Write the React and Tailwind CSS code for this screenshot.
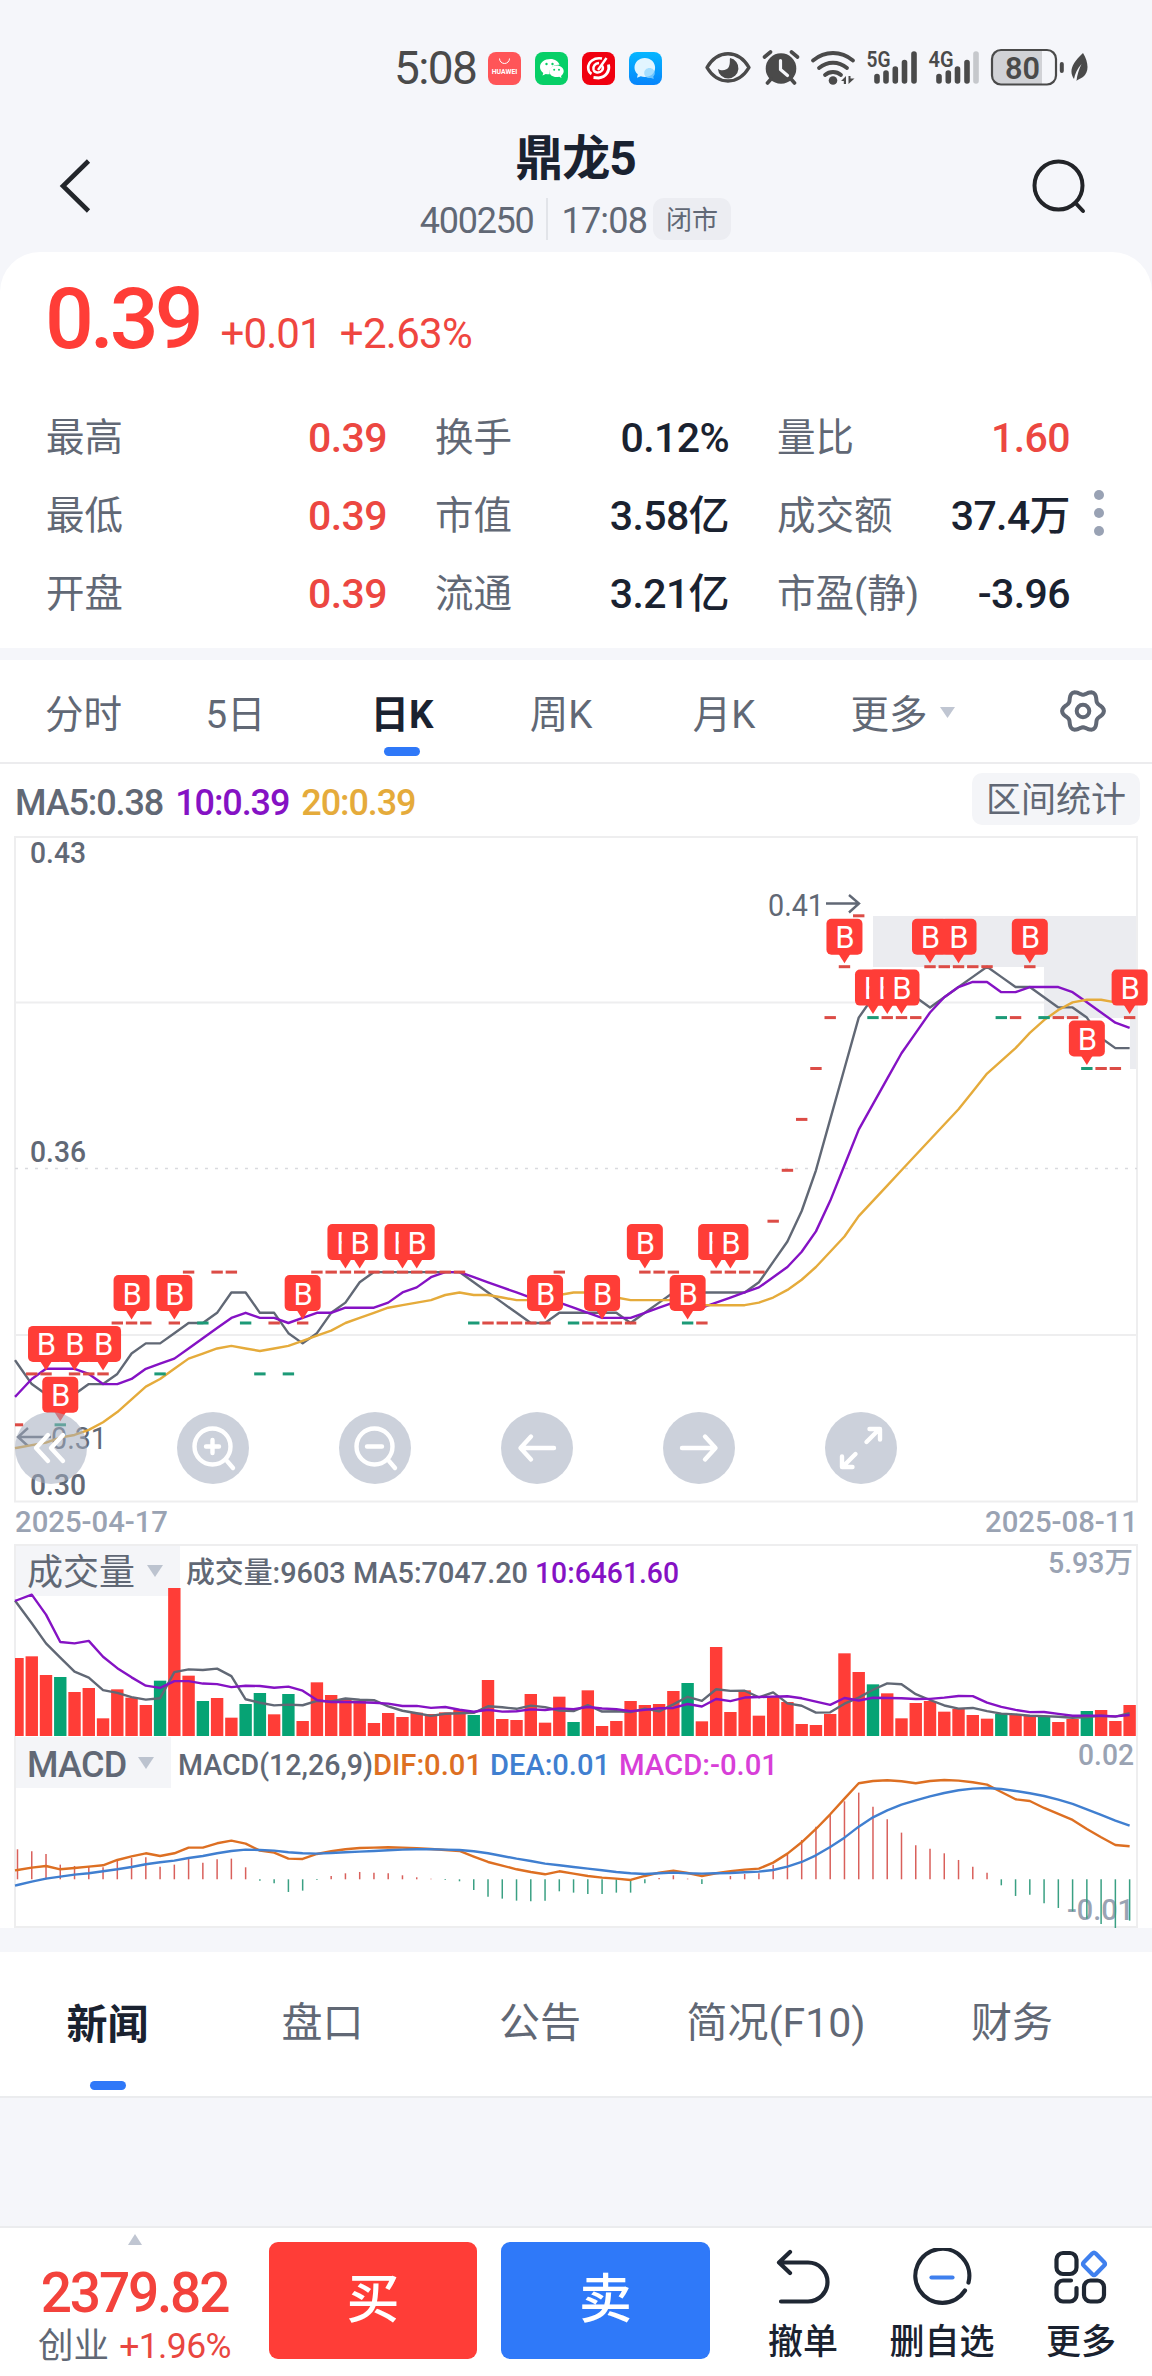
import { useState } from "react";

const RED = "#ff3d37";
const GREEN = "#06a374";
const GRAY = "#616875";
const PURPLE = "#8512c4";
const GOLD = "#e5ab3b";
const ORANGE = "#dd6f22";
const BLUE = "#407fd0";

const FONT = "font-['Roboto','Noto_Sans_CJK_SC',sans-serif]";

const QUOTES = [
  { label: "最高", value: "0.39", up: true },
  { label: "换手", value: "0.12%" },
  { label: "量比", value: "1.60", up: true },
  { label: "最低", value: "0.39", up: true },
  { label: "市值", value: "3.58亿" },
  { label: "成交额", value: "37.4万" },
  { label: "开盘", value: "0.39", up: true },
  { label: "流通", value: "3.21亿" },
  { label: "市盈(静)", value: "-3.96" },
];

// closes in cents above 0.31; the first 19 days are off screen and only feed the averages
const HISTORY = [0, 0, -2, 0, -1, -2, -2, -3, -3, -2, -2, -1, 0, 1, 2, 3, 2, 1, 0];
const CLOSES = [
  0, 1, 1, 0, 1, 1, 1, 2, 2, 2, 1, 2, 3, 2, 3, 3, 2, 1, 2, 1,
  2, 3, 3, 3, 3, 3, 3, 3, 3, 3, 3, 3, 2, 2, 2, 2, 2, 2, 3, 2,
  2, 2, 2, 2, 3, 3, 3, 2, 2, 3, 3, 3, 3, 4, 5, 6, 7, 8, 9, 10,
  8, 8, 8, 8, 9, 9, 9, 9, 9, 8, 8, 9, 8, 8, 8, 7, 7, 7, 8,
];
const DOWN_DAYS = [3, 10, 13, 16, 17, 19, 32, 39, 47, 60, 69, 72, 75];
const BUYS = [2, 3, 4, 6, 8, 11, 20, 23, 24, 27, 28, 37, 41, 44, 47, 49, 50, 58, 60, 61, 62, 64, 66, 71, 75, 78];

const VOL_HISTORY = [79, 783, 997, 172, 69, 529, 483, 392, 342];
const VOLUMES = [
  234, 239, 183, 177, 132, 144, 53, 140, 115, 93, 166, 444, 181, 105, 114, 55, 96, 129, 65, 126,
  45, 161, 123, 108, 106, 39, 69, 57, 70, 66, 71, 78, 63, 168, 51, 48, 126, 40, 118, 42,
  137, 30, 45, 105, 93, 96, 135, 159, 44, 267, 72, 137, 61, 118, 102, 36, 33, 66, 248, 192,
  155, 128, 53, 99, 105, 73, 81, 63, 52, 66, 63, 60, 57, 42, 51, 75, 78, 45, 93,
];

const DIF = [
  28, 35, 40, 30, 34, 38, 42, 58, 69, 78, 70, 78, 95, 95, 108, 116, 107, 86, 80, 62,
  61, 76, 84, 90, 94, 95, 96, 95, 93, 91, 88, 85, 68, 52, 41, 30, 22, 15, 24, 17,
  10, 5, 2, -2, 10, 20, 26, 19, 10, 18, 24, 29, 32, 50, 77, 111, 151, 195, 242, 288,
  295, 297, 294, 288, 295, 298, 296, 291, 284, 262, 240, 235, 214, 196, 178, 151, 126, 103, 99,
];
const DEA = [
  -17, -7, 2, 8, 14, 18, 24, 30, 37, 45, 51, 56, 64, 70, 78, 85, 89, 88, 86, 81,
  78, 77, 79, 81, 83, 85, 87, 89, 90, 90, 89, 88, 84, 78, 70, 62, 55, 47, 42, 37,
  32, 27, 22, 18, 16, 18, 20, 18, 17, 18, 19, 21, 23, 28, 38, 52, 72, 97, 125, 158,
  186, 207, 224, 237, 249, 259, 267, 272, 274, 271, 265, 258, 250, 239, 226, 210, 193, 176, 161,
];

const xAt = (i) => 17.5 + i * 14.258;
const priceY = (level) => 588.8 - level * 50.9;
const volY = (v) => 192 - v / 3;
const macdY = (v) => 143.3 - v / 3;

const average = (history, values, n) => {
  const all = [...history, ...values];
  return values.map((_, i) => {
    const end = history.length + i + 1;
    return all.slice(end - n, end).reduce((a, b) => a + b, 0) / n;
  });
};

// extends the line to the left frame along its first segment
const toPoints = (values, scale) => {
  const pts = values.map((v, i) => [xAt(i), scale(v)]);
  const slope = (pts[1][1] - pts[0][1]) / (pts[1][0] - pts[0][0]);
  return [[15, pts[0][1] - slope * 2.5], ...pts].map((p) => p.join(",")).join(" ");
};

// six-lobed outline of the settings gear
const GEAR = Array.from({ length: 72 }, (_, i) => {
  const a = (i * Math.PI) / 36;
  const r = 18.6 + 2.3 * Math.cos(6 * a);
  return `${(24 + r * Math.cos(a)).toFixed(2)},${(24 + r * Math.sin(a)).toFixed(2)}`;
}).join(" ");

function Line({ values, scale, color }) {
  return <polyline points={toPoints(values, scale)} fill="none" stroke={color} strokeWidth="2.4" strokeLinejoin="round" />;
}

function Label({ x, y, width, size = 29, color = GRAY, weight = 500, children }) {
  return (
    <text x={x} y={y} fontSize={size} fill={color} fontWeight={weight} textLength={width} lengthAdjust="spacingAndGlyphs">
      {children}
    </text>
  );
}

function StatusBar() {
  return (
    <div className="relative flex h-[100px] items-start text-[#4a4a4a]">
      <span className="ml-[394px] mt-[41px] w-[94px] text-[46px] leading-[54px] tracking-[-1.6px]">5:08</span>
      <div className="mt-[52px] flex gap-[14px]">
        <svg width="33" height="33" viewBox="0 0 33 33">
          <rect width="33" height="33" rx="8" fill="#ff5558" />
          <path d="M11.5 6.5a5 5 0 0 0 10 0" fill="none" stroke="#fff" strokeWidth="1" />
          <text x="3.8" y="21.5" fontSize="6.6" fontWeight="700" fill="#fff" textLength="25.5" lengthAdjust="spacingAndGlyphs">HUAWEI</text>
        </svg>
        <svg width="33" height="33" viewBox="0 0 33 33">
          <rect width="33" height="33" rx="8" fill="#07cf67" />
          <path d="M15.500 7C9.500 7 5 10.500 5 15c0 2.500 1.200 4.500 3.300 5.900L7.500 23.500l3.200-1.600c1.200.3 2.500.5 4 .4C13.500 17 17.500 12.500 24.500 12.800 23.500 9.500 20 7 15.500 7z" fill="#fff" />
          <path d="M21.500 13.500c-4.200 0-7.200 2.500-7.200 5.800s3 5.800 7.200 5.800c1 0 1.900-.2 2.700-.4l2.300 1.200-.5-2c1.600-1.200 2.700-2.700 2.700-4.600 0-3.300-3-5.800-7.200-5.800z" fill="#fff" />
          <g fill="#07cf67">
            <circle cx="11.500" cy="12" r="1.200" /><circle cx="17.500" cy="12" r="1.200" />
            <circle cx="19.200" cy="17.800" r="1" /><circle cx="24" cy="17.800" r="1" />
          </g>
        </svg>
        <svg width="33" height="33" viewBox="0 0 33 33">
          <rect width="33" height="33" rx="8" fill="#f0000f" />
          <g fill="none" stroke="#fff">
            <path d="M20 6.500C12 5 6 10 6.200 16c.1 3 1.500 5 3.300 6" strokeWidth="2.600" />
            <path d="M17 11c-4 .5-6 3-5.500 6.500.6 3.500 6 4 8.500 1 1.500-2 1-4-.5-5.500" strokeWidth="2.400" />
            <path d="M26.500 12.500c1.500 6-2 12.500-10 13.500l-5-.5" strokeWidth="2.800" />
            <path d="M24.500 6l-8.500 12" strokeWidth="2.400" />
          </g>
        </svg>
        <svg width="33" height="33" viewBox="0 0 33 33">
          <defs>
            <linearGradient id="msg" x1="0" y1="0" x2="0" y2="1">
              <stop offset="0" stopColor="#06b6ff" />
              <stop offset="1" stopColor="#0785fb" />
            </linearGradient>
          </defs>
          <rect width="33" height="33" rx="8" fill="url(#msg)" />
          <path d="M15.800 6c6 0 10.300 4.300 10.300 9.800S21.800 25 15.800 25c-1.500 0-2.800-.2-4-.7L8 25.800l.8-3.500C6.700 20.600 5.500 18.400 5.500 15.800 5.500 10.300 9.800 6 15.800 6z" fill="#e2f5ff" />
          <path d="M20.500 16c3 0 5.300 2.200 5.300 5 0 1.400-.6 2.600-1.500 3.500l.4 2.500-2.600-1.100c-4.200.8-6.900-1.800-6.900-4.900 0-2.800 2.300-5 5.300-5z" fill="#8fd5ff" opacity=".75" />
        </svg>
      </div>
      <svg className="ml-[43px] mt-[46px]" width="384" height="42" viewBox="705 46 384 42" fill="none" stroke="#4a4a4a">
        {/* eye comfort */}
        <path d="M707 67.500C713 57.500 720 53.800 728 53.800s15 3.700 21 13.700c-6 10-13 13.500-21 13.500s-15-3.500-21-13.500z" strokeWidth="3.400" strokeLinejoin="round" />
        <path d="M730 58a10.300 10.300 0 1 1-12.100 11c3.500 2.300 9.500 1.500 11.100-2.500 1.400-3.500.5-6.500 1-8.500z" fill="#4a4a4a" stroke="none" />
        {/* alarm */}
        <circle cx="781" cy="68.500" r="15.300" fill="#4a4a4a" stroke="none" />
        <path d="M764.500 57l6-5M797.500 57l-6-5M771 79l-3.500 4M791 79l3.500 4" strokeWidth="3.600" strokeLinecap="round" />
        <path d="M780.500 60.500v9l7 6" stroke="#f5f6fa" strokeWidth="3.200" strokeLinecap="round" strokeLinejoin="round" />
        {/* wifi */}
        <g strokeWidth="3.800" strokeLinecap="round">
          <path d="M813 60.500c12-10 28-10 40 0" />
          <path d="M819 68c8.500-7 19.500-7 28 0" />
          <path d="M825 75c4.500-4 11.500-4 16 0" />
        </g>
        <circle cx="833" cy="80.500" r="4.300" fill="#4a4a4a" stroke="none" />
        <path d="M841 81l5-5v8h-2.200v-3zM848.500 84v-8h2v2.500h4z" fill="#4a4a4a" stroke="none" />
        {/* signal bars */}
        <g strokeWidth="5.600" strokeLinecap="round">
          <path d="M877 76.500V81M886 73v8M895.300 69v12M904.500 62.500V81M914 54v27" />
          <path d="M939 76.500V81M948.300 73v8M957.500 69v12M967 62.500V81" />
          <path d="M976 54v27" stroke="#c6c8cc" />
        </g>
        <g fill="#4a4a4a" stroke="none">
          <text x="866.500" y="67" fontSize="21.500" fontWeight="600" textLength="24" lengthAdjust="spacingAndGlyphs">5G</text>
          <text x="928.500" y="67" fontSize="21.500" fontWeight="600" textLength="25" lengthAdjust="spacingAndGlyphs">4G</text>
        </g>
        {/* battery */}
        <path d="M1001 50.500h41v33.500h-41a8 8 0 0 1-8-8V58.500a8 8 0 0 1 8-8z" fill="#d1d2d6" stroke="none" />
        <rect x="992" y="50" width="64" height="34.500" rx="9" strokeWidth="2.200" />
        <path d="M1061.800 64v7" strokeWidth="4" strokeLinecap="round" />
        <text x="1005" y="78.500" fontSize="31.500" fontWeight="600" fill="#4a4a4a" stroke="none" textLength="35" lengthAdjust="spacingAndGlyphs">80</text>
        <path d="M1083 53c5.500 9 6.500 19 0 24-3 2-5.500 2.500-6.500 4 .5-6 2.500-12 5-17-4.500 5-6.500 10-7.500 15-5-7-3-15 9-26z" fill="#4a4a4a" stroke="none" />
      </svg>
    </div>
  );
}

function Header() {
  return (
    <header className="flex h-[152px] justify-between">
      <svg className="ml-[56px] mt-[56px] mr-[25px]" width="40" height="60" viewBox="0 0 40 60" fill="none" stroke="#23262b" strokeWidth="4.600">
        <path d="M32.500 5L7 30l25.500 25" />
      </svg>
      <div className="flex flex-col items-center">
        <h1 className="mt-[30px] text-[48px] leading-[58px] font-bold tracking-[-1px] text-[#1a2230]">鼎龙5</h1>
        <div className="mt-[10px] flex h-[42px] items-center text-[36px] leading-[42px] text-[#616875]">
          <span className="pt-[3px] tracking-[-1.3px]">400250</span>
          <span className="ml-[13px] h-[42px] w-[2px] bg-[#e2e4e9]" />
          <span className="ml-[13px] mr-[6px] pt-[3px] tracking-[-0.8px]">17:08</span>
          <span className="flex h-[42px] w-[78px] items-center justify-center rounded-[11px] bg-[#ecedf2] pt-[2px] text-[26px]">闭市</span>
        </div>
      </div>
      <svg className="mr-[62px] mt-[57px]" width="60" height="60" viewBox="0 0 60 60" fill="none" stroke="#222428" strokeWidth="4">
        <circle cx="28.500" cy="28.500" r="24" />
        <path d="M45.500 46l7.500 8" strokeLinecap="round" />
      </svg>
    </header>
  );
}

function QuotePanel() {
  return (
    <section className="relative h-[396px] rounded-t-[40px] bg-white">
      <div className="flex items-baseline pl-[45px] pt-[17px] text-[#ff3d37]">
        <span className="text-[86px] leading-[100px] font-medium tracking-[-4px]">0.39</span>
        <span className="ml-[21px] text-[42px] tracking-[-0.9px] text-[#ef4640]">+0.01</span>
        <span className="ml-[18px] text-[42px] tracking-[-0.7px] text-[#ef4640]">+2.63%</span>
      </div>
      <div className="mt-[30px] grid grid-cols-[341px_294px_293px] gap-x-[48px] pl-[46px] text-[38.5px] leading-[78px]">
        {QUOTES.map((q) => (
          <div key={q.label} className="flex h-[78px] justify-between whitespace-nowrap">
            <span className="text-[#616875]">{q.label}</span>
            <span className={`text-[41px] tracking-[-0.6px] font-medium ${q.up ? "text-[#ec4741]" : "text-[#1a2230]"}`}>{q.value}</span>
          </div>
        ))}
      </div>
      <div className="absolute top-[238px] right-[48px] flex flex-col gap-2">
        {[0, 1, 2].map((i) => <span key={i} className="size-[10px] rounded-full bg-[#99a2b4]" />)}
      </div>
    </section>
  );
}

function PeriodTabs() {
  const [active, setActive] = useState("日K");
  const tabs = ["分时", "5日", "日K", "周K", "月K", "更多"];
  return (
    <nav className="mt-[12px] grid h-[104px] grid-cols-[167px_137px_196px_122px_204px_126px_200px] border-b-2 border-[#ececee] bg-white text-[38.5px] text-[#616875]">
      {tabs.map((t) => (
        <button
          key={t}
          onClick={() => setActive(t)}
          className={`relative flex items-center justify-center pt-[7px] whitespace-nowrap ${active === t ? "font-bold text-[#1a2230]" : ""}`}
        >
          {t}
          {t === "更多" && (
            <svg className="absolute top-[47px] right-[-3px]" width="15" height="11"><path d="M0 0h15L7.500 11z" fill="#c0c6d2" /></svg>
          )}
          {active === t && <span className="absolute bottom-[6px] h-[9px] w-[36px] rounded-full bg-[#2f78f8]" />}
        </button>
      ))}
      <div className="pl-[107px] pt-[27px]">
        <svg width="48" height="48" viewBox="0 0 48 48" fill="none" stroke="#616875" strokeWidth="4" strokeLinejoin="round">
          <polygon points={GEAR} />
          <circle cx="24" cy="24" r="6.300" />
        </svg>
      </div>
    </nav>
  );
}

function BuyMarker({ i }) {
  const x = xAt(i);
  const y = priceY(CLOSES[i]);
  return (
    <g>
      <path d={`M${x - 6} ${y - 13}h12l-6 9.500z`} fill={RED} />
      <rect x={x - 18} y={y - 48} width="36" height="36" rx="5" fill={RED} />
      <text x={x + 0.5} y={y - 18.5} textAnchor="middle" fontSize="31" fill="#fff">B</text>
    </g>
  );
}

function ChartButton({ children }) {
  return (
    <button className="flex size-[72px] items-center justify-center rounded-full bg-[#a2abbd]/55">
      <svg width="48" height="48" viewBox="0 0 48 48" fill="none" stroke="#fff" strokeWidth="4.400" strokeLinecap="round" strokeLinejoin="round">
        {children}
      </svg>
    </button>
  );
}

function PriceChart() {
  return (
    <div className="relative h-[708px]">
      <svg width="1152" height="708" className="block">
        <path d="M873 80h264v153h-7v-51h-86v-51H873z" fill="#ebecf0" />
        <g stroke="#eeeeef" strokeWidth="2" fill="none">
          <rect x="15" y="1" width="1122" height="664.500" />
          <path d="M15 166.500h1122M15 499h1122" />
        </g>
        <path d="M15 332.500h1122" stroke="#d9dade" strokeWidth="1.500" strokeDasharray="3 7" />
        <Label x={30} y={27} width={56}>0.43</Label>
        <Label x={30} y={326} width={56}>0.36</Label>
        <Label x={30} y={659} width={56}>0.30</Label>
        <Label x={768} y={80} width={56} size={31} weight={400}>0.41</Label>
        <Label x={51} y={613} width={56} size={31} weight={400}>0.31</Label>
        <path d="M826 67.500h33M849 59l10 8.500-10 9" fill="none" stroke={GRAY} strokeWidth="2.400" />
        <path d="M51 601H19M28 592l-10 9 10 9" fill="none" stroke={GRAY} strokeWidth="2.400" />
        <Line values={average(HISTORY, CLOSES, 5)} scale={priceY} color={GRAY} />
        <Line values={average(HISTORY, CLOSES, 10)} scale={priceY} color={PURPLE} />
        <Line values={average(HISTORY, CLOSES, 20)} scale={priceY} color={GOLD} />
        {CLOSES.map((c, i) => {
          const left = Math.max(xAt(i) - 5.7, 15);
          return <rect key={i} x={left} y={priceY(c) - 1.5} width={xAt(i) + 5.7 - left} height="3" fill={DOWN_DAYS.includes(i) ? "#1c9a77" : "#dc4c46"} />;
        })}
        {BUYS.map((i) => <BuyMarker key={i} i={i} />)}
        <Label x={15} y={695.5} width={153} color="#9aa3b3">2025-04-17</Label>
        <Label x={985} y={695.5} width={153} color="#9aa3b3">2025-08-11</Label>
      </svg>
      <div className="absolute top-[576px] left-[15px] flex gap-[90px]">
        <ChartButton><path d="M21 11L9 24l12 13M36 11L24 24l12 13" /></ChartButton>
        <ChartButton><circle cx="23.500" cy="22.500" r="18" /><path d="M38 37l6 7M23.500 16v13M17 22.500h13" /></ChartButton>
        <ChartButton><circle cx="23.500" cy="22.500" r="18" /><path d="M38 37l6 7M16 22.500h15" /></ChartButton>
        <ChartButton><path d="M41 24H8M18 12.500L7.500 24 18 35.500" /></ChartButton>
        <ChartButton><path d="M7 24h33M30 12.500L40.500 24 30 35.500" /></ChartButton>
        <ChartButton><path d="M29.500 18L42 5.500M32.500 5H43v10.500M18.500 30L6 42.500M5 32.500V43h10.500" /></ChartButton>
      </div>
    </div>
  );
}

function PanelName({ children, className }) {
  return (
    <button className={`absolute left-[15px] flex h-[51px] items-center bg-[#f4f5f8] pl-[12px] text-[36px] text-[#616875] ${className}`}>
      <span className="pt-[4px]">{children}</span>
      <svg className="absolute top-[20px] right-[17px]" width="16" height="12"><path d="M0 0h16L8 12z" fill="#bcc3cf" /></svg>
    </button>
  );
}

function VolumePanel() {
  return (
    <div className="relative h-[192px]">
      <PanelName className="top-[1px] w-[165px]">成交量</PanelName>
      <svg width="1152" height="192" className="relative block">
        <path d="M15 192V1h1122v191" fill="none" stroke="#eeeeef" strokeWidth="2" />
        {VOLUMES.map((v, i) => {
          const left = Math.max(xAt(i) - 6.200, 15);
          return <rect key={i} x={left} y={volY(v)} width={xAt(i) + 6.200 - left} height={v / 3} fill={DOWN_DAYS.includes(i) ? GREEN : RED} />;
        })}
        <Line values={average(VOL_HISTORY, VOLUMES, 5)} scale={volY} color={GRAY} />
        <Line values={average(VOL_HISTORY, VOLUMES, 10)} scale={volY} color={PURPLE} />
        <Label x={186} y={39} width={342}>成交量:9603 MA5:7047.20</Label>
        <Label x={535} y={39} width={144} color={PURPLE}>10:6461.60</Label>
        <Label x={1048} y={29} width={85} color="#9aa3b3">5.93万</Label>
      </svg>
    </div>
  );
}

function MacdPanel() {
  return (
    <div className="relative h-[192px]">
      <PanelName className="top-[1px] w-[156px] font-medium tracking-[-0.7px]">MACD</PanelName>
      <svg width="1152" height="192" className="relative block">
        <path d="M15 0v191h1122V0" fill="none" stroke="#eeeeef" strokeWidth="2" />
        <Label x={1067} y={184} width={67} color="#9aa3b3">-0.01</Label>
        {DIF.map((dif, i) => {
          const bar = 2 * (dif - DEA[i]);
          return <path key={i} d={`M${xAt(i)} ${macdY(0)}V${macdY(bar)}`} stroke={bar > 0 ? "#d9605b" : "#3aa083"} strokeWidth="1.500" />;
        })}
        <Line values={DIF} scale={macdY} color={ORANGE} />
        <Line values={DEA} scale={macdY} color={BLUE} />
        <Label x={178} y={39} width={195}>MACD(12,26,9)</Label>
        <Label x={373} y={39} width={109} color={ORANGE}>DIF:0.01</Label>
        <Label x={490} y={39} width={120} color={BLUE}>DEA:0.01</Label>
        <Label x={619} y={39} width={159} color="#d83fd8">MACD:-0.01</Label>
        <Label x={1078} y={29} width={56} color="#9aa3b3">0.02</Label>
      </svg>
    </div>
  );
}

function InfoTabs() {
  const [active, setActive] = useState("新闻");
  const tabs = ["新闻", "盘口", "公告", "简况(F10)", "财务"];
  return (
    <nav className="mt-[24px] grid h-[146px] grid-cols-[215px_215px_220px_252px_220px] border-b-2 border-[#ebecee] bg-white text-[41px] text-[#616875]">
      {tabs.map((t) => (
        <button
          key={t}
          onClick={() => setActive(t)}
          className={`relative flex items-center justify-center ${active === t ? "pt-[3px] font-bold text-[#1a2230]" : ""}`}
        >
          {t}
          {active === t && <span className="absolute bottom-[6px] h-[9px] w-[36px] rounded-full bg-[#2f78f8]" />}
        </button>
      ))}
    </nav>
  );
}

function FooterAction({ label, className, children }) {
  return (
    <button className={`flex flex-col items-center text-[35px] leading-[42px] font-medium text-[#1a2230] ${className}`}>
      <svg width="60" height="60" viewBox="0 0 60 60" fill="none" stroke="#1f2733" strokeWidth="4.200" strokeLinecap="round" strokeLinejoin="round">
        {children}
      </svg>
      <span className="mt-[14px]">{label}</span>
    </button>
  );
}

function TradeBar() {
  return (
    <footer className="flex h-[150px] border-t-2 border-[#ebecee] bg-white whitespace-nowrap">
      <div className="flex w-[269px] flex-col items-center">
        <svg className="mt-[6px]" width="14" height="11"><path d="M0 11h14L7 0z" fill="#c0c6d2" /></svg>
        <div className="mt-[16px] text-[55px] leading-[64px] font-medium tracking-[-2.2px] text-[#f3423c]">2379.82</div>
        <div className="mt-[-2px] flex items-center gap-[10px] text-[35.5px] leading-[46px] text-[#616875]">
          <span>创业</span>
          <span className="tracking-[-0.6px] text-[#e9463f]">+1.96%</span>
        </div>
      </div>
      <button className="mt-[14px] h-[117px] w-[208px] rounded-[9px] bg-[#ff3d37] text-[53px] font-medium text-white">买</button>
      <button className="mt-[14px] ml-[24px] h-[117px] w-[209px] rounded-[9px] bg-[#2f79f9] text-[53px] font-medium text-white">卖</button>
      <FooterAction label="撤单" className="mt-[20px] ml-[57px] w-[72px]">
        <path d="M17 4L6 14.500 17 25M7 14.500h28a19.500 19.500 0 0 1 0 39H8" />
      </FooterAction>
      <FooterAction label="删自选" className="mt-[20px] ml-[50px] w-[106px]">
        <path d="M53.500 43A27 27 0 1 1 57 35" transform="translate(-.5 -.5)" />
        <path d="M19.500 29.500h21" stroke="#3f80ee" />
      </FooterAction>
      <FooterAction label="更多" className="mt-[20px] ml-[50px] w-[72px]">
        <rect x="5.500" y="5" width="20" height="21" rx="6.500" />
        <rect x="33" y="32.500" width="20" height="21" rx="6.500" />
        <path d="M25.500 40v7a6.500 6.500 0 0 1-6.500 6.500h-7a6.500 6.500 0 0 1-6.500-6.500v-8a6.500 6.500 0 0 1 6.500-6.500h8" />
        <path d="M41.300 5.500q1.700-1.700 3.400 0l8.500 8.700q1.700 1.700 0 3.400l-8.500 8.700q-1.700 1.700-3.400 0l-8.500-8.700q-1.700-1.700 0-3.400z" stroke="#3f80ee" />
      </FooterAction>
    </footer>
  );
}

export default function App() {
  return (
    <div className={`flex h-[2376px] w-[1152px] flex-col overflow-hidden bg-[#f5f6fa] ${FONT}`}>
      <StatusBar />
      <Header />
      <QuotePanel />
      <PeriodTabs />
      <section className="bg-white">
        <div className="flex h-[72px] items-center justify-between pl-[15px] pr-[12px]">
          <div className="flex gap-[12px] pt-[5px] text-[36px] font-medium tracking-[-1.1px]">
            <span className="text-[#616875]">MA5:0.38</span>
            <span className="text-[#8512c4]">10:0.39</span>
            <span className="text-[#e5ab3b]">20:0.39</span>
          </div>
          <button className="mb-[2px] flex h-[52px] w-[168px] items-center justify-center rounded-[10px] bg-[#f4f5f8] pt-[5px] text-[35px] text-[#616875]">区间统计</button>
        </div>
        <PriceChart />
        <VolumePanel />
        <MacdPanel />
      </section>
      <InfoTabs />
      <div className="flex-1" />
      <TradeBar />
    </div>
  );
}
